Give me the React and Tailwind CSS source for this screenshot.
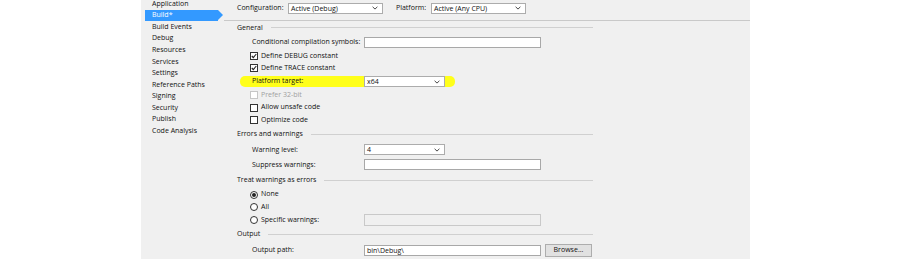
// Project properties — Build page (VS style)

const NAV = [
  'Application',
  'Build*',
  'Build Events',
  'Debug',
  'Resources',
  'Services',
  'Settings',
  'Reference Paths',
  'Signing',
  'Security',
  'Publish',
  'Code Analysis',
]

function Chevron() {
  return (
    <svg width="6" height="4" viewBox="0 0 6 4" className="shrink-0">
      <path d="M0.6 0.8 L3 3.1 L5.4 0.8" fill="none" stroke="#333" strokeWidth="0.9" />
    </svg>
  )
}

function Select({ value, className }) {
  return (
    <div className={`flex h-[11px] items-center justify-between border border-[#acacac] bg-white pl-[2px] pr-[4px] ${className}`}>
      <span className="leading-none">{value}</span>
      <Chevron />
    </div>
  )
}

function Input({ value = '', disabled, className = '' }) {
  return (
    <div
      className={`flex h-[11px] w-[177px] items-center border px-[2px] leading-none ${
        disabled ? 'border-[#c9c9c9] bg-[#f0f0f0]' : 'border-[#a8a8a8] bg-white'
      } ${className}`}
    >
      {value}
    </div>
  )
}

function Check({ checked, disabled }) {
  return (
    <span
      className={`flex h-[8px] w-[8px] items-center justify-center border bg-white ${
        disabled ? 'border-[#c6c6c6]' : 'border-[#333]'
      }`}
    >
      {checked && (
        <svg width="6" height="6" viewBox="0 0 6 6">
          <path d="M0.8 3 L2.3 4.6 L5.3 1" fill="none" stroke="#222" strokeWidth="1.1" />
        </svg>
      )}
    </span>
  )
}

function Radio({ checked }) {
  return (
    <span className="flex h-[8px] w-[8px] items-center justify-center rounded-full border border-[#333] bg-white">
      {checked && <span className="h-[4px] w-[4px] rounded-full bg-[#222]" />}
    </span>
  )
}

function Section({ title, h }) {
  return (
    <div className={`flex w-[369px] items-center gap-[8px] pl-[13px] ${h}`}>
      <span className="shrink-0">{title}</span>
      <span className="h-px flex-1 bg-[#d0d0d0]" />
    </div>
  )
}

function Field({ label, h, children }) {
  return (
    <div className={`flex items-center pl-[28px] ${h}`}>
      <span className="w-[112px] shrink-0">{label}</span>
      {children}
    </div>
  )
}

function Option({ h, children, label, disabled }) {
  return (
    <div className={`flex items-center gap-[3px] pl-[26px] ${h} ${disabled ? 'text-[#a0a0a0]' : ''}`}>
      {children}
      <span>{label}</span>
    </div>
  )
}

export default function App() {
  return (
    <div
      className="flex h-[259px] w-[900px] overflow-hidden bg-white text-[7px] text-[#111]"
      style={{ fontFamily: '"Open Sans", "Noto Sans", sans-serif' }}
    >
      <div className="ml-[141px] flex w-[609px] bg-[#f0f0f0]">
        {/* left nav */}
        <div className="-mt-[2px] flex w-[83px] shrink-0 flex-col">
          {NAV.map((item) => {
            const active = item === 'Build*'
            return (
              <div key={item} className="flex h-[11.6px] items-center">
                {active ? (
                  <div className="ml-[4px] flex h-[10.5px] items-center">
                    <div className="flex h-full w-[73px] items-center bg-[#3399ff] pl-[7px] text-white">{item}</div>
                    <div className="h-0 w-0 border-y-[5.25px] border-l-[5px] border-y-transparent border-l-[#3399ff]" />
                  </div>
                ) : (
                  <span className="pl-[11px]">{item}</span>
                )}
              </div>
            )
          })}
        </div>

        {/* page */}
        <div className="flex flex-1 flex-col">
          <div className="flex h-[21px] items-center border-b border-[#c9c9c9] pb-[3px] pl-[13px]">
            <span className="w-[51px]">Configuration:</span>
            <Select value="Active (Debug)" className="w-[95px]" />
            <span className="ml-[13px] w-[35px]">Platform:</span>
            <Select value="Active (Any CPU)" className="w-[95px]" />
          </div>

          <Section title="General" h="h-[14px]" />
          <Field label="Conditional compilation symbols:" h="h-[15px]">
            <Input />
          </Field>
          <Option h="h-[12px]" label="Define DEBUG constant">
            <Check checked />
          </Option>
          <Option h="h-[13px]" label="Define TRACE constant">
            <Check checked />
          </Option>
          <div className="flex h-[14px] items-center pl-[16px]">
            <div className="flex h-[11px] w-[215px] items-center rounded-[5px] bg-[#ffff1a] pl-[12px]">
              <span className="w-[112px] shrink-0">Platform target:</span>
              <Select value="x64" className="w-[81px]" />
            </div>
          </div>
          <Option h="h-[13px]" label="Prefer 32-bit" disabled>
            <Check disabled />
          </Option>
          <Option h="h-[12px]" label="Allow unsafe code">
            <Check />
          </Option>
          <Option h="h-[13px]" label="Optimize code">
            <Check />
          </Option>

          <Section title="Errors and warnings" h="h-[16px]" />
          <Field label="Warning level:" h="h-[15px]">
            <Select value="4" className="w-[81px]" />
          </Field>
          <Field label="Suppress warnings:" h="h-[15px]">
            <Input />
          </Field>

          <Section title="Treat warnings as errors" h="h-[16px]" />
          <Option h="h-[13px]" label="None">
            <Radio checked />
          </Option>
          <Option h="h-[12px]" label="All">
            <Radio />
          </Option>
          <div className="flex h-[14px] items-center pl-[26px]">
            <div className="flex w-[114px] shrink-0 items-center gap-[3px]">
              <Radio />
              <span>Specific warnings:</span>
            </div>
            <Input disabled className="h-[12px]" />
          </div>

          <Section title="Output" h="h-[14px]" />
          <Field label="Output path:" h="h-[18px]">
            <Input value="bin\Debug\" />
            <div className="ml-[4px] flex h-[13px] w-[47px] items-center justify-center border border-[#adadad] bg-[#e1e1e1]">
              Browse...
            </div>
          </Field>
        </div>
      </div>
    </div>
  )
}
